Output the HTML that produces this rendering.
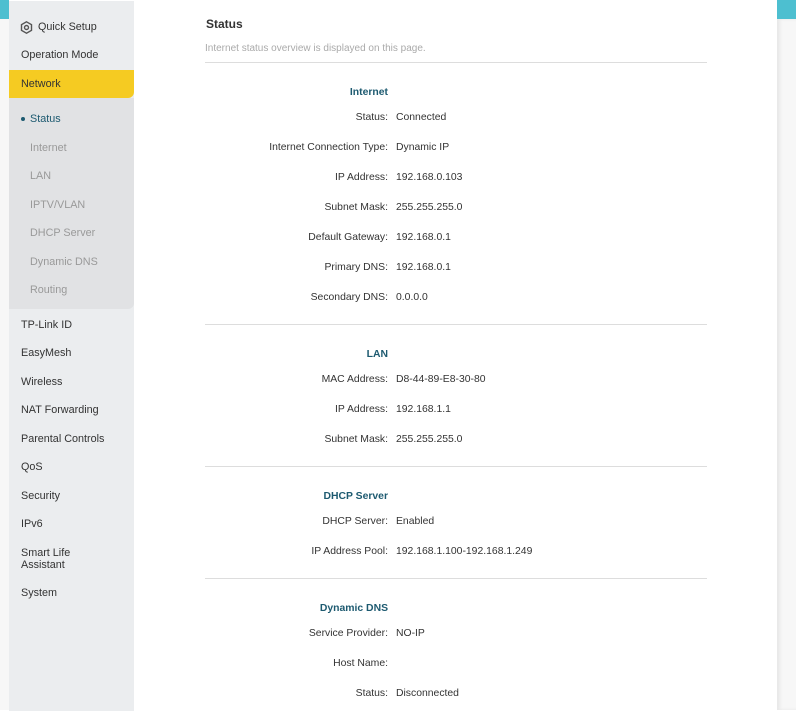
<!DOCTYPE html><html><head><style>
body{margin:0;width:796px;height:710px;overflow:hidden;background:#fff;font-family:"Liberation Sans",Arial,sans-serif;font-size:10.4px;color:#333;position:relative}
.tl{position:absolute;left:0;top:0;width:9px;height:19px;background:#4dbfd0}
.tr{position:absolute;left:777px;top:0;width:19px;height:19px;background:#4dbfd0}
.rg{position:absolute;left:777px;top:19px;width:19px;height:691px;background:#f7f7f7;box-shadow:inset 3px 0 3px #e8e8e8}
.lg{position:absolute;left:0;top:19px;width:9px;height:691px;background:#f7f7f7}
.sb{position:absolute;left:9px;top:1px;width:125px;height:710px;background:#ebedef;font-size:10.8px}
.it{position:absolute;left:12px;color:#333}
.net{position:absolute;left:0;top:69px;width:125px;height:28px;background:#f5cb22;border-radius:0 0 6px 0}
.sub{position:absolute;left:0;top:97px;width:125px;height:211px;background:#e1e2e4;border-radius:0 0 6px 0}
.si{position:absolute;left:21px;color:#999}
.main{position:absolute;left:134px;top:1px;width:643px;height:710px;background:#fff}
.h{position:absolute;left:72px;top:16px;font-size:12px;font-weight:bold;color:#333}
.d{position:absolute;left:71px;top:42px;color:#aaa;font-size:10px}
.hr{position:absolute;left:71px;width:502px;height:1px;background:#ddd}
.lb{position:absolute;right:389px;text-align:right;white-space:nowrap}
.v{position:absolute;left:262px;white-space:nowrap}
.sh{position:absolute;right:389px;font-weight:bold;color:#1d5a70}
</style></head><body>
<div class="tl"></div><div class="lg"></div><div class="tr"></div><div class="rg"></div>
<div class="sb">
<svg style="position:absolute;left:11px;top:20px" width="13" height="13" viewBox="0 0 13 13"><polygon points="6.5,0.8 11.5,3.6 11.5,9.4 6.5,12.2 1.5,9.4 1.5,3.6" fill="none" stroke="#555" stroke-width="1.4"/><circle cx="6.5" cy="6.5" r="2" fill="none" stroke="#555" stroke-width="1.4"/></svg>
<div class="it" style="left:29px;top:20px">Quick Setup</div>
<div class="it" style="top:48px">Operation Mode</div>
<div class="net"><div class="it" style="top:8px">Network</div></div>
<div class="sub">
<div style="position:absolute;left:12px;top:19px;width:4px;height:4px;border-radius:2px;background:#1d5a70"></div>
<div class="si" style="top:15px;color:#1d5a70">Status</div>
<div class="si" style="top:44px">Internet</div>
<div class="si" style="top:72px">LAN</div>
<div class="si" style="top:101px">IPTV/VLAN</div>
<div class="si" style="top:129px">DHCP Server</div>
<div class="si" style="top:158px">Dynamic DNS</div>
<div class="si" style="top:186px">Routing</div>
</div>
<div class="it" style="top:318px">TP-Link ID</div>
<div class="it" style="top:346px">EasyMesh</div>
<div class="it" style="top:375px">Wireless</div>
<div class="it" style="top:403px">NAT Forwarding</div>
<div class="it" style="top:432px">Parental Controls</div>
<div class="it" style="top:460px">QoS</div>
<div class="it" style="top:489px">Security</div>
<div class="it" style="top:517px">IPv6</div>
<div class="it" style="top:546px;line-height:12px">Smart Life<br>Assistant</div>
<div class="it" style="top:586px">System</div>
</div>
<div class="main">
<div class="h">Status</div>
<div class="d">Internet status overview is displayed on this page.</div>
<div class="hr" style="top:61px"></div>
<div class="sh" style="top:86px">Internet</div>
<div class="lb" style="top:111px">Status:</div><div class="v" style="top:111px">Connected</div>
<div class="lb" style="top:141px">Internet Connection Type:</div><div class="v" style="top:141px">Dynamic IP</div>
<div class="lb" style="top:171px">IP Address:</div><div class="v" style="top:171px">192.168.0.103</div>
<div class="lb" style="top:201px">Subnet Mask:</div><div class="v" style="top:201px">255.255.255.0</div>
<div class="lb" style="top:231px">Default Gateway:</div><div class="v" style="top:231px">192.168.0.1</div>
<div class="lb" style="top:261px">Primary DNS:</div><div class="v" style="top:261px">192.168.0.1</div>
<div class="lb" style="top:291px">Secondary DNS:</div><div class="v" style="top:291px">0.0.0.0</div>
<div class="hr" style="top:323px"></div>
<div class="sh" style="top:348px">LAN</div>
<div class="lb" style="top:373px">MAC Address:</div><div class="v" style="top:373px">D8-44-89-E8-30-80</div>
<div class="lb" style="top:403px">IP Address:</div><div class="v" style="top:403px">192.168.1.1</div>
<div class="lb" style="top:433px">Subnet Mask:</div><div class="v" style="top:433px">255.255.255.0</div>
<div class="hr" style="top:465px"></div>
<div class="sh" style="top:490px">DHCP Server</div>
<div class="lb" style="top:515px">DHCP Server:</div><div class="v" style="top:515px">Enabled</div>
<div class="lb" style="top:545px">IP Address Pool:</div><div class="v" style="top:545px">192.168.1.100-192.168.1.249</div>
<div class="hr" style="top:577px"></div>
<div class="sh" style="top:602px">Dynamic DNS</div>
<div class="lb" style="top:627px">Service Provider:</div><div class="v" style="top:627px">NO-IP</div>
<div class="lb" style="top:657px">Host Name:</div>
<div class="lb" style="top:687px">Status:</div><div class="v" style="top:687px">Disconnected</div>
</div>
</body></html>
